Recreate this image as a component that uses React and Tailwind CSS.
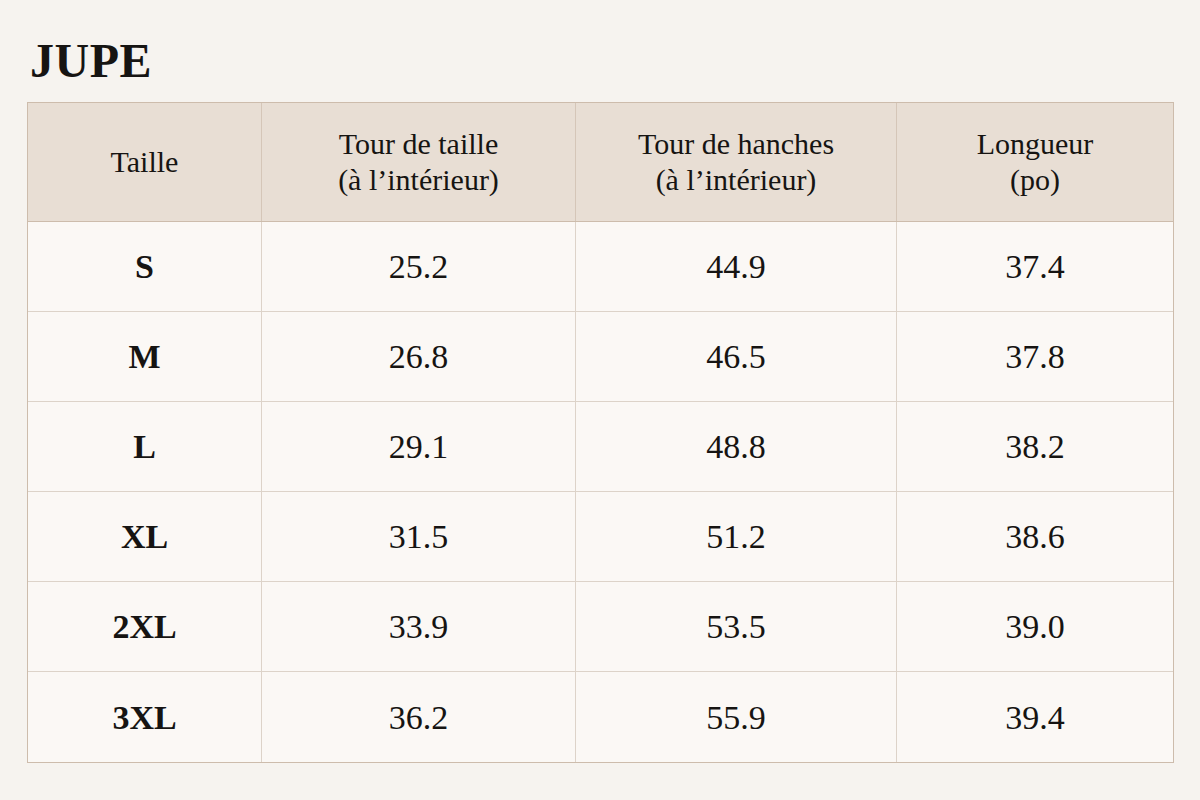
import React from 'react';

const headers = [
  ['Taille'],
  ['Tour de taille', '(à l’intérieur)'],
  ['Tour de hanches', '(à l’intérieur)'],
  ['Longueur', '(po)'],
];

const rows = [
  ['S', '25.2', '44.9', '37.4'],
  ['M', '26.8', '46.5', '37.8'],
  ['L', '29.1', '48.8', '38.2'],
  ['XL', '31.5', '51.2', '38.6'],
  ['2XL', '33.9', '53.5', '39.0'],
  ['3XL', '36.2', '55.9', '39.4'],
];

const cols = 'grid grid-cols-[233px_314px_321px_277px]';

const App = () => {
  return (
    <div className="w-[1200px] h-[800px] bg-[#f6f3ef] px-[27px] pt-[37px] font-['Liberation_Serif',serif] text-[#161412]">
      {/* Titre */}
      <h1 className="text-[48px] leading-[48px] font-bold pl-[3px] tracking-[0.5px]">JUPE</h1>

      {/* Tableau des tailles */}
      <div className="mt-[17px] w-[1147px] border border-[#cdbcac] bg-[#fbf8f5]">
        <div className={`${cols} h-[119px] bg-[#e8ded4] border-b border-[#cdbcac]`}>
          {headers.map((h, i) => (
            <div
              key={i}
              className={`flex flex-col items-center justify-center text-[30px] leading-[36px] ${i > 0 ? 'border-l border-[#d5c6b8]' : ''}`}
            >
              {h.map((line) => (
                <span key={line}>{line}</span>
              ))}
            </div>
          ))}
        </div>

        {rows.map((r, ri) => (
          <div
            key={r[0]}
            className={`${cols} h-[90px] ${ri < rows.length - 1 ? 'border-b border-[#ddd3c9]' : ''}`}
          >
            {r.map((c, ci) => (
              <div
                key={ci}
                className={`flex items-center justify-center text-[34px] ${ci === 0 ? 'font-bold' : 'border-l border-[#ddd3c9]'}`}
              >
                {c}
              </div>
            ))}
          </div>
        ))}
      </div>
    </div>
  );
};

export default App;
